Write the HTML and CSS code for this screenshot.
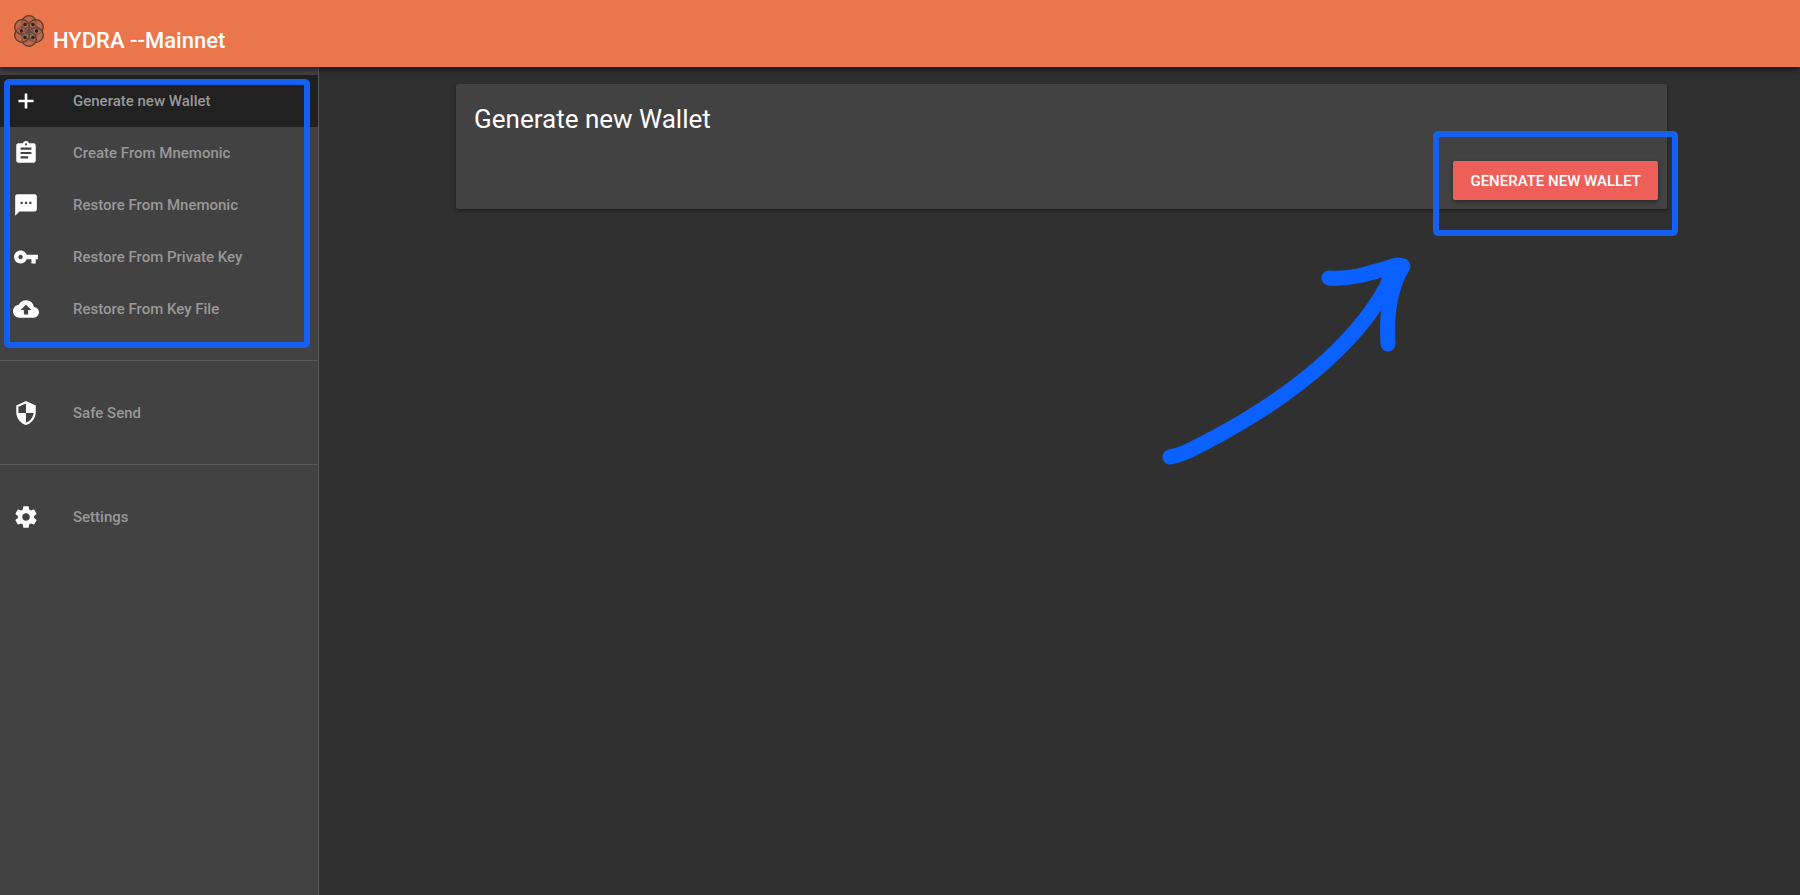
FILE: index.html
```html
<!DOCTYPE html>
<html lang="en">
<head>
    <meta charset="UTF-8">
    <meta name="viewport" content="width=device-width, initial-scale=1.0">
    <title>HYDRA Wallet</title>
    <link rel="stylesheet" href="styles.css">
</head>
<body>
    <header class="toolbar">
        <svg class="logo" viewBox="0 0 32 32" aria-hidden="true">
            <g class="logo-petals">
                <circle cx="16" cy="8" r="7.3"/>
                <circle cx="23" cy="12" r="7.3"/>
                <circle cx="23" cy="20" r="7.3"/>
                <circle cx="16" cy="24" r="7.3"/>
                <circle cx="9" cy="20" r="7.3"/>
                <circle cx="9" cy="12" r="7.3"/>
            </g>
            <g class="logo-lines">
                <circle cx="16" cy="16" r="8"/>
                <circle cx="16" cy="16" r="4"/>
                <path d="M16 6v20M7.3 11l17.4 10M7.3 21l17.4-10"/>
            </g>
            <g class="logo-dots">
                <circle cx="12" cy="9.5" r="1.7"/>
                <circle cx="20" cy="9.5" r="1.7"/>
                <circle cx="23.5" cy="16" r="1.7"/>
                <circle cx="20" cy="22.5" r="1.7"/>
                <circle cx="12" cy="22.5" r="1.7"/>
                <circle cx="8.5" cy="16" r="1.7"/>
            </g>
        </svg>
        <h1 class="toolbar-title">HYDRA --Mainnet</h1>
    </header>

    <div class="layout">
        <nav class="sidebar">
            <div class="nav-group">
                <a class="nav-item active" href="#create">
                    <svg class="icon" viewBox="0 0 24 24"><path d="M19 13.2h-5.8V19h-2.4v-5.8H5v-2.4h5.8V5h2.4v5.8H19v2.4z"/></svg>
                    <span>Generate new Wallet</span>
                </a>
                <a class="nav-item" href="#create-mnemonic">
                    <svg class="icon" viewBox="0 0 24 24"><path d="M19 3h-4.18C14.4 1.84 13.3 1 12 1c-1.3 0-2.4.84-2.82 2H5c-1.1 0-2 .9-2 2v14c0 1.1.9 2 2 2h14c1.1 0 2-.9 2-2V5c0-1.1-.9-2-2-2zm-7 0c.55 0 1 .45 1 1s-.45 1-1 1-1-.45-1-1 .45-1 1-1zm2 14H7v-2h7v2zm3-4H7v-2h10v2zm0-4H7V7h10v2z"/></svg>
                    <span>Create From Mnemonic</span>
                </a>
                <a class="nav-item" href="#restore-mnemonic">
                    <svg class="icon" viewBox="0 0 24 24"><path d="M20 2H4c-1.1 0-1.99.9-1.99 2L2 22l4-4h14c1.1 0 2-.9 2-2V4c0-1.1-.9-2-2-2zM9 11H7V9h2v2zm4 0h-2V9h2v2zm4 0h-2V9h2v2z"/></svg>
                    <span>Restore From Mnemonic</span>
                </a>
                <a class="nav-item" href="#restore-wif">
                    <svg class="icon" viewBox="0 0 24 24"><path d="M12.65 10C11.83 7.67 9.61 6 7 6c-3.31 0-6 2.69-6 6s2.69 6 6 6c2.61 0 4.83-1.67 5.65-4H17v4h4v-4h2v-4H12.65zM7 14c-1.1 0-2-.9-2-2s.9-2 2-2 2 .9 2 2-.9 2-2 2z"/></svg>
                    <span>Restore From Private Key</span>
                </a>
                <a class="nav-item" href="#restore-key-file">
                    <svg class="icon" viewBox="0 0 24 24"><path d="M19.35 10.04C18.67 6.59 15.64 4 12 4 9.11 4 6.6 5.64 5.35 8.04 2.34 8.36 0 10.91 0 14c0 3.31 2.69 6 6 6h13c2.76 0 5-2.24 5-5 0-2.64-2.05-4.78-4.65-4.96zM14 13v4h-4v-4H7l5-5 5 5h-3z"/></svg>
                    <span>Restore From Key File</span>
                </a>
                <div class="highlight highlight-nav"></div>
            </div>
            <div class="nav-group">
                <a class="nav-item" href="#safe-send">
                    <svg class="icon" viewBox="0 0 24 24"><path d="M12 1L3 5v6c0 5.55 3.84 10.74 9 12 5.16-1.26 9-6.45 9-12V5l-9-4zm0 10.99h7c-.53 4.12-3.28 7.79-7 8.94V12H5V6.3l7-3.11v8.8z"/></svg>
                    <span>Safe Send</span>
                </a>
            </div>
            <div class="nav-group">
                <a class="nav-item" href="#settings">
                    <svg class="icon" viewBox="0 0 24 24"><path d="M19.43 12.98c.04-.32.07-.64.07-.98s-.03-.66-.07-.98l2.11-1.65c.19-.15.24-.42.12-.64l-2-3.46c-.12-.22-.39-.3-.61-.22l-2.49 1c-.52-.4-1.08-.73-1.69-.98l-.38-2.65C14.46 2.18 14.25 2 14 2h-4c-.25 0-.46.18-.49.42l-.38 2.65c-.61.25-1.17.59-1.69.98l-2.49-1c-.23-.09-.49 0-.61.22l-2 3.46c-.13.22-.07.49.12.64l2.11 1.65c-.04.32-.07.65-.07.98s.03.66.07.98l-2.11 1.65c-.19.15-.24.42-.12.64l2 3.46c.12.22.39.3.61.22l2.49-1c.52.4 1.08.73 1.69.98l.38 2.65c.03.24.24.42.49.42h4c.25 0 .46-.18.49-.42l.38-2.65c.61-.25 1.17-.59 1.69-.98l2.49 1c.23.09.49 0 .61-.22l2-3.46c.12-.22.07-.49-.12-.64l-2.11-1.65zM12 15.5c-1.93 0-3.5-1.57-3.5-3.5s1.57-3.5 3.5-3.5 3.5 1.57 3.5 3.5-1.57 3.5-3.5 3.5z"/></svg>
                    <span>Settings</span>
                </a>
            </div>
        </nav>

        <main class="content">
            <section class="card">
                <h2 class="card-title">Generate new Wallet</h2>
                <div class="card-actions">
                    <button class="btn" type="button">GENERATE NEW WALLET</button>
                </div>
                <div class="highlight highlight-action"></div>
                <svg class="arrow" viewBox="0 0 300 240" aria-hidden="true">
                    <path d="M30 217C44 215 56 207 68 201C112 178 154 150 186 121C218 92 240 62 252 36"/>
                    <path d="M189 38C212 40 233 32 257 25L263 26C250 47 246 72 248 104"/>
                    <path d="M247 50L250 34L258 30L251 56Z"/>
                </svg>
            </section>
        </main>
    </div>
</body>
</html>
```
FILE: styles.css
```css
* {
    box-sizing: border-box;
}
body {
    display: flex;
    flex-direction: column;
    min-height: 100vh;
    margin: 0;
    background-color: #303030;
    color: #fff;
    font-family: Roboto, sans-serif;
}

/* toolbar */
.toolbar {
    position: relative;
    z-index: 1;
    display: flex;
    gap: 8px;
    height: 67px;
    padding: 15px 13px 0;
    background-color: #ec764c;
    box-shadow: 0 2px 4px rgba(0, 0, 0, 0.4), 0 4px 10px rgba(0, 0, 0, 0.2);
}
.logo {
    width: 32px;
    height: 32px;
}
.logo-petals {
    fill: #a9624a;
    fill-opacity: 0.7;
    stroke: #54392f;
    stroke-width: 1.3;
}
.logo-lines {
    fill: none;
    stroke: #64534b;
}
.logo-dots {
    fill: #33201c;
}
.toolbar-title {
    margin: 12px 0 0;
    font-size: 22px;
    font-weight: 500;
    line-height: 28px;
}

/* sidebar */
.layout {
    display: flex;
    flex: 1;
}
.sidebar {
    flex: 0 0 319px;
    padding-top: 8px;
    background-color: #424242;
    border-right: 1px solid #5a5a5a;
}
.nav-group {
    position: relative;
    padding-bottom: 25px;
}
.nav-group + .nav-group {
    padding-top: 26px;
    border-top: 1px solid #5a5a5a;
}
.nav-item {
    display: flex;
    align-items: center;
    gap: 34px;
    height: 52px;
    padding: 0 13px;
    color: #989898;
    font-size: 15px;
    font-weight: 500;
    text-decoration: none;
}
.nav-item.active {
    background-color: #212121;
}
.icon {
    width: 26px;
    height: 26px;
    fill: #fff;
}

/* content */
.content {
    flex: 1;
    padding: 17px 12px 0 16px;
}
.card {
    position: relative;
    width: 83.33%;
    margin: 0 auto;
    background-color: #424242;
    border-radius: 2px;
    box-shadow: 0 2px 4px rgba(0, 0, 0, 0.4);
}
.card-title {
    margin: 0;
    padding: 17px 18px;
    font-size: 26px;
    font-weight: 400;
    line-height: 36px;
}
.card-actions {
    display: flex;
    justify-content: flex-end;
    padding: 7px 9px 9px;
}
.btn {
    height: 39px;
    padding: 0 17px;
    border: none;
    border-radius: 2px;
    background-color: #ef5f5a;
    box-shadow: 0 2px 4px rgba(0, 0, 0, 0.4);
    color: #fff;
    font-family: inherit;
    font-size: 15px;
    font-weight: 500;
    cursor: pointer;
}

/* marker boxes and arrow */
.highlight {
    position: absolute;
    border: 6px solid #1560ee;
    border-radius: 5px;
    pointer-events: none;
}
.highlight-nav {
    top: 4px;
    right: 8px;
    bottom: 12px;
    left: 4px;
}
.highlight-action {
    right: -11px;
    bottom: -27px;
    width: 245px;
    height: 105px;
}
.arrow {
    position: absolute;
    top: 156px;
    right: 227px;
    width: 300px;
    height: 240px;
    fill: none;
    stroke: #0b61ff;
    stroke-width: 15;
    stroke-linecap: round;
    stroke-linejoin: round;
    pointer-events: none;
}
```
